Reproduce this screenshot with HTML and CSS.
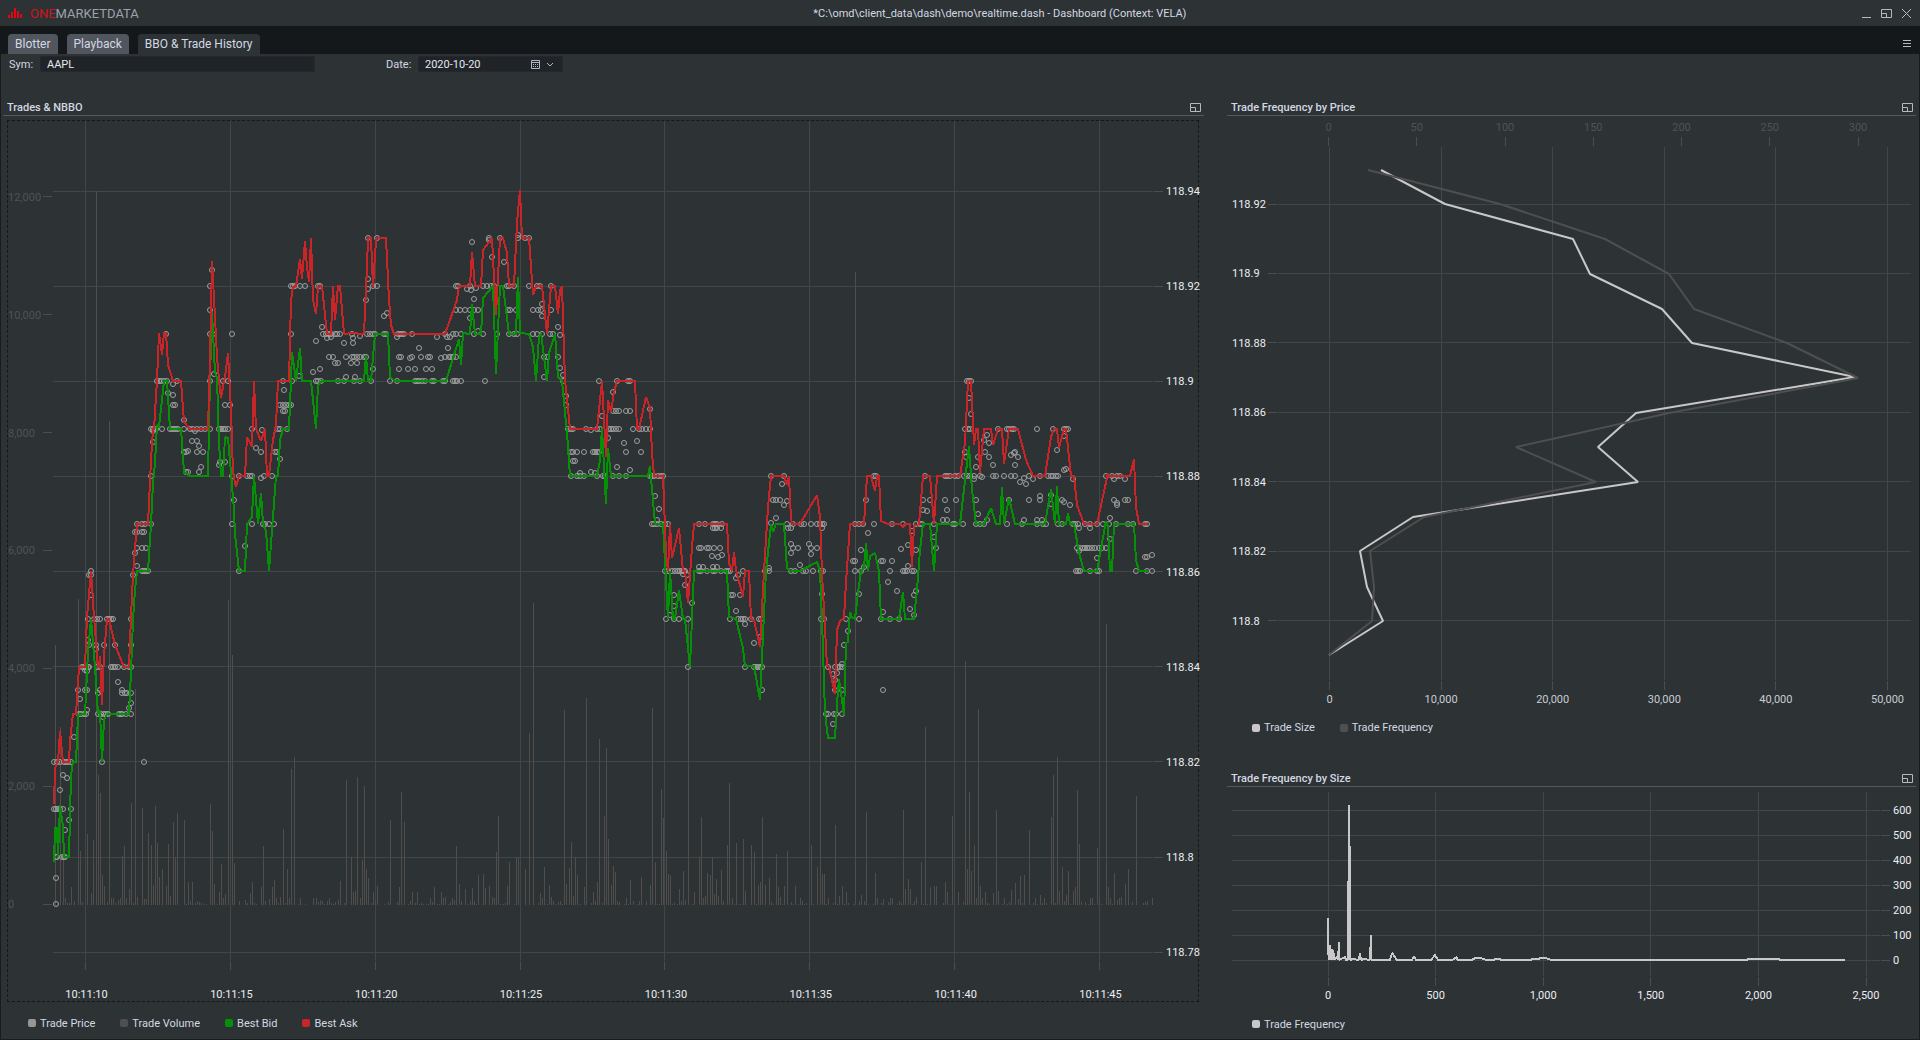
FILE: index.html
```html
<!DOCTYPE html>
<html lang="en">
<head>
    <meta charset="UTF-8">
    <meta name="viewport" content="width=device-width, initial-scale=1.0">
    <title>Dashboard</title>
    <link rel="stylesheet" href="styles.css">
</head>
<body>

<header class="titlebar">
    <svg class="logo" width="14" height="10" viewBox="0 0 14 10"><path d="M0 7h2v3h-2zM3 4h2v6h-2zM6 0h2v10h-2zM9 3h2v7h-2zM12 6h2v4h-2z"/></svg>
    <span class="brand"><b>ONE</b>MARKETDATA</span>
    <h1>*C:\omd\client_data\dash\demo\realtime.dash - Dashboard (Context: VELA)</h1>
    <div class="window-buttons">
        <button type="button" aria-label="Minimize"><svg width="11" height="11"><path d="M1 9.5h9"/></svg></button>
        <button type="button" aria-label="Restore"><svg width="11" height="11"><path d="M.5 1.5h10v8h-10zM.5 5.5h5v4"/></svg></button>
        <button type="button" aria-label="Close"><svg width="11" height="11"><path d="M1 1l9 9M10 1l-9 9"/></svg></button>
    </div>
</header>

<nav class="tabs">
    <button type="button">Blotter</button>
    <button type="button">Playback</button>
    <button type="button" class="active">BBO &amp; Trade History</button>
    <button type="button" class="menu" aria-label="Menu"><svg width="9" height="8"><path d="M0 .5h8M0 3.5h8M0 6.5h8"/></svg></button>
</nav>

<main>
    <form class="filters">
        <label for="sym">Sym:</label>
        <input type="text" id="sym" value="AAPL">
        <label for="date" class="date-label">Date:</label>
        <div class="date-field">
            <input type="text" id="date" value="2020-10-20">
            <button type="button" aria-label="Open calendar">
                <svg width="24" height="11"><path d="M1.5 1.5h8v8h-8zM1.5 3.5h8M3 5.5h1M5 5.5h1M7 5.5h1M3 7.5h1M5 7.5h1M7 7.5h1M17 4l3 3l3-3"/></svg>
            </button>
        </div>
    </form>

    <div class="panels">
        <section class="panel trades">
            <div class="panel-head">
                <h2>Trades &amp; NBBO</h2>
                <button type="button" aria-label="Expand"><svg width="11" height="9"><path d="M.5 .5h10v8h-10zM.5 4.5h5v4"/></svg></button>
            </div>
            <div class="chart boxed"><svg id="tradesChart"></svg></div>
            <ul class="legend">
                <li><i class="price"></i>Trade Price</li>
                <li><i class="volume"></i>Trade Volume</li>
                <li><i class="bid"></i>Best Bid</li>
                <li><i class="ask"></i>Best Ask</li>
            </ul>
        </section>

        <section class="panel by-price">
            <div class="panel-head">
                <h2>Trade Frequency by Price</h2>
                <button type="button" aria-label="Expand"><svg width="11" height="9"><path d="M.5 .5h10v8h-10zM.5 4.5h5v4"/></svg></button>
            </div>
            <div class="chart"><svg id="priceChart"></svg></div>
            <ul class="legend">
                <li><i class="size"></i>Trade Size</li>
                <li><i class="volume"></i>Trade Frequency</li>
            </ul>
        </section>

        <section class="panel by-size">
            <div class="panel-head">
                <h2>Trade Frequency by Size</h2>
                <button type="button" aria-label="Expand"><svg width="11" height="9"><path d="M.5 .5h10v8h-10zM.5 4.5h5v4"/></svg></button>
            </div>
            <div class="chart"><svg id="sizeChart"></svg></div>
            <ul class="legend">
                <li><i class="size"></i>Trade Frequency</li>
            </ul>
        </section>
    </div>
</main>

<script src="data.js"></script>
<script src="charts.js"></script>
</body>
</html>
```

FILE: styles.css
```css
* { box-sizing: border-box; }
body { font-family: Roboto, sans-serif; font-size: 11px; margin: 0; height: 100vh; min-height: 600px; display: flex; flex-direction: column; background: #2d3235; color: #d3d8e2; }
button { font: inherit; color: inherit; background: none; border: 0; padding: 0; cursor: pointer; }
button svg { display: block; fill: none; stroke: #b4b8bf; }
h1, h2, ul { margin: 0; padding: 0; font-weight: normal; }

.titlebar { height: 26px; flex: none; display: flex; align-items: center; padding: 0 8px; }
.logo { fill: #e30613; }
.brand { margin-left: 8px; font-size: 13px; color: #9da1aa; }
.brand b { font-weight: normal; color: #d0141f; }
.titlebar h1 { flex: 1; text-align: center; font-size: 11px; }
.window-buttons { display: flex; gap: 9px; }

.tabs { height: 28px; flex: none; display: flex; align-items: flex-end; gap: 9px; padding: 0 8px; background: #14181b; }
.tabs button { height: 20px; padding: 0 7px; border-radius: 4px 4px 0 0; background: #51555e; font-size: 12px; }
.tabs button.active { background: #2d3235; }
.tabs .menu { margin-left: auto; padding: 0; background: none; }

main { flex: 1; min-height: 0; display: flex; flex-direction: column; border: 1px solid #181c1f; border-top: 0; }
.filters { display: flex; align-items: center; height: 44px; padding: 2px 8px 26px; }
.filters label { width: 31px; }
.filters input { width: 275px; height: 16px; padding: 0 6px; border: 1px solid #24282c; border-radius: 2px; background: #202328; color: #e4e8f0; font: inherit; }
.filters .date-label { margin-left: 71px; width: 32px; }
.date-field { display: flex; align-items: center; width: 145px; height: 16px; border: 1px solid #24282c; border-radius: 2px; background: #202328; padding-right: 8px; }
.date-field input { flex: 1; min-width: 0; width: auto; border: 0; background: none; height: 14px; }

.panels { flex: 1; min-height: 0; display: grid; grid-template-columns: 1201fr 689fr; grid-template-rows: 671fr 270fr; column-gap: 23px; padding: 0 3px 0 2px; }
.panel { display: flex; flex-direction: column; min-width: 0; min-height: 0; }
.trades { grid-row: 1 / 3; }
.panel-head { height: 18px; flex: none; display: flex; align-items: center; justify-content: space-between; padding: 2px 3px 0 4px; border-bottom: 1px solid #55595b; }
.panel-head h2 { font-size: 11px; font-weight: 500; }
.chart { flex: 1; min-height: 0; }
.chart.boxed { margin: 4px 5px 0 4px; border: 1px dashed #14181b; }
.chart svg { display: block; width: 100%; height: 100%; overflow: visible; }
.legend { flex: none; display: flex; gap: 25px; list-style: none; height: 30px; padding-left: 25px; align-items: center; }
.legend li { display: flex; align-items: center; gap: 4px; }
.legend i { width: 8px; height: 8px; border-radius: 2px; }
.trades .legend { height: 37px; padding-top: 5px; }
.by-price .legend { height: 52px; padding-bottom: 31px; }
.legend .price { background: #969696; }
.legend .volume { background: #504f4f; }
.legend .bid { background: #059105; }
.legend .ask { background: #c92427; }
.legend .size { background: #c8c8c8; }

.grid { stroke: #414648; }
.tick { stroke: #4a4e50; }
.axis { font-size: 11px; fill: #eceef2; }
.axis.dim { fill: #505356; }
.axis.soft { fill: #c8ccd3; }
.bars { stroke: #504e4d; fill: none; }
.dots { stroke: #a0a0a0; fill: none; }
.line { fill: none; stroke-width: 2px; stroke-linejoin: bevel; shape-rendering: crispEdges; }
.line.smooth { shape-rendering: auto; }
.line.bid { stroke: #059105; }
.line.ask { stroke: #c92427; }
.line.size { stroke: #c8c8c8; }
.line.freq { stroke: #504f4f; }
```

FILE: data.js
```js
// All series are x,y pairs in dashboard units (1920 x 1040).
const ask = `54,804 55,769 57,762 58,762 60,731 63,762 69,762 70,741 73,714 76,714 79,667 85,667 87,617 91,571 94,617 98,667 99,667 100,656 102,705 104,655 107,619 109,619 115,645 124,667 129,667 131,617 133,575 135,548 137,524 148,524
149,503 151,460 153,429 154,429 157,380 159,333 162,355 164,333 166,333 168,365 173,381 181,381 184,422 190,429 208,429 210,357 212,261 215,317 217,357 219,380 221,398 224,381 225,377 228,353 231,410 233,473 236,487 239,476 245,476 247,437 252,447 254,381 256,429 261,441 265,429 267,476 269,476 273,440 276,425 278,381 289,381 291,300 293,287
296,286 300,259 302,279 305,241 307,267 309,282 311,238 313,300 316,314 318,287 322,286 327,334 331,334 333,286 335,320 338,286 340,286 344,334 352,333 364,334 367,267 368,238 371,238 373,287 376,240 377,238 386,238 389,300 391,325 394,334 410,334 413,333 417,334 445,334 457,300 459,286 470,286 472,252 475,286 481,286 483,250 492,238 494,277 496,315 500,238 503,238 507,253 509,286 514,286 517,223 520,190 522,238 529,238 533,295 536,286 542,286 547,334 551,286 555,286 558,314 560,290 562,286 565,380 570,429
597,429 602,381 606,457 608,400 611,412 614,392 617,381 635,381 637,429 639,429 646,397 650,408 652,453 654,476 663,476 666,553 668,571 670,524 672,558 679,528 683,571 685,571 688,603 692,547 694,524 727,524 729,563 732,571 734,552 736,570 743,597 745,571 749,571 751,619 754,620 760,647 764,571 768,507 771,476 784,476 787,485 789,476 791,520 793,524 800,524 817,495 820,517 822,573 827,666 829,667 835,694 837,630 840,621 844,618 846,583 850,524 864,524 867,476 871,476 875,491 877,476 879,476 881,521 888,524
900,524 903,527 905,524 910,524 912,567 914,526 919,524 923,476 930,476 934,524 937,476 960,476 965,443 968,381 971,381 974,445 976,429 978,429 980,473 984,429 991,429 993,445 998,429 1002,429 1004,464 1009,429 1018,429 1026,460 1033,476 1045,476 1051,437 1054,429 1057,429 1059,448 1064,429 1066,429 1071,476 1074,476 1077,505 1084,524 1097,524 1108,473 1109,476 1130,476 1134,459 1136,507 1139,524 1148,524`;

const bid = `54,862 55,828 57,828 58,857 60,805 63,827 64,857 69,857 71,775 73,762 76,762 78,715 85,714 88,652 91,619 95,667 98,714 100,710 102,762 104,720 107,714 129,714 131,672 133,620 135,590 137,571 148,571 151,524
153,483 155,463 157,425 159,427 164,381 167,381 170,429 181,429 184,472 190,476 208,476 210,377 212,312 215,373 217,377 219,443 221,476 223,476 225,437 228,438 231,473 234,510 235,534 239,571 245,571 247,524 252,517 254,476 258,524 261,493 263,524 266,531 269,571 273,517 276,476 278,476 280,440 283,429 289,429 291,380 292,352 296,381 300,348 302,381
311,381 316,429 318,385 322,381 364,381 366,355 368,381 371,381 375,334 388,334 390,377 395,381 446,381 459,339 461,365 463,333 470,334 472,304 475,334 481,334 483,298 493,286 496,374 500,286 503,286 509,334 516,334 518,277 520,333 529,334 533,347 536,381 539,337 541,333 547,381 549,353 555,334 558,377 562,381 567,433 570,476
597,476 600,460 602,428 606,504 608,448 611,476 648,476 650,466 655,524 663,524 668,619 670,571 673,619 675,619 679,590 683,619 685,619 690,667 694,571 727,571 729,617 736,619 743,648 745,666 754,666 760,700 766,571 769,543 771,524 773,532 776,524 784,524 787,568 790,571 800,571 817,562 820,571 822,619 825,713 828,738 835,738 837,703 839,679 844,715 846,643 848,642 850,612 852,617 855,619 858,593 861,571 864,568 866,543 868,571 870,556 875,553 879,571 881,619
899,619 903,592 905,619 914,619 917,590 920,550 923,524 930,524 934,571 937,524 960,524 969,446 972,490 976,524 984,524 991,508 996,524 1000,524 1002,487 1004,524 1009,498 1015,524 1045,524 1051,489 1055,524 1057,486 1059,524 1066,524 1068,513 1070,524 1074,524 1079,553 1084,571 1097,571 1106,521 1108,527 1110,571 1112,571 1114,524 1134,524 1136,560 1139,571 1148,571`;

// trades that printed on the same level: y -> list of x
const tradeRows = {
    238: [368,377,489,500,518,525,529],
    286: [210,291,293,295,300,305,318,320,373,377,456,458,470,483,487,491,494,507,509,514,529,537,540,551],
    310: [210,456,460,465,470,474,478,508,510,516,533,538,541,551],
    334: [166,210,213,232,291,323,326,329,331,335,337,340,352,367,370,373,375,384,386,398,400,402,404,412,445,453,456,461,474,483,497,509,514,517,533,537,542,550,553],
    357: [329,333,346,352,354,357,360,364,366,399,401,421,428,430,445,449,451,453,456,544,547,558],
    363: [335,338,351,357],
    369: [320,373,399,408,415,426,432],
    381: [157,159,161,164,167,177,210,223,228,283,292,316,318,321,338,344,354,360,371,390,397,415,417,419,422,425,432,434,443,445,453,455,457,461,485,563,599,617,628,630,967,969,971],
    405: [173,175,225,230,280,283,286,289,291,566],
    411: [283,285,613,616,619,626,630],
    429: [151,153,156,162,170,172,174,176,178,184,190,193,197,201,205,210,219,221,223,225,228,252,278,280,287,568,571,573,586,597,600,609,611,613,616,619,633,639,642,646,650,965,968,970,998,1007,1009,1012,1014,1037,1053,1064,1066,1068],
    441: [192,197],
    452: [184,186,197,203,261,275,277,571,573,577,584,593,595,597,599,626,641],
    472: [186,188,199],
    476: [151,232,239,247,250,252,264,272,571,577,580,584,597,603,605,613,619,626,650,652,654,658,661,663,771,784,874,876,925,945,947,950,955,958,964,967,970,974,980,993,996,1004,1011,1015,1029,1040,1048,1051,1053,1056,1058,1106,1112,1117,1120],
    500: [773,776,780,866,923,930,945,956,976,1009,1029,1040,1062,1114,1125,1128],
    520: [943,947,987,1024,1037,1042],
    524: [137,142,145,151,232,252,263,265,269,274,652,654,657,661,665,668,699,705,713,715,717,722,787,793,801,804,811,817,820,822,824,855,859,863,874,892,903,916,920,922,934,953,955,963,976,980,984,1007,1022,1037,1043,1046,1058,1062,1073,1075,1078,1085,1090,1097,1103,1109,1116,1128,1133,1145,1147],
    528: [713,715,717,721,788,791,822,1079,1090],
    532: [135,137,142,144],
    548: [137,142,146,699,701,707,709,714,720,793,798,817,936,1077,1080,1083,1085,1087,1089,1092,1095,1099,1102,1106],
    561: [853,855,881,883,892],
    567: [699,703,713,717,864],
    571: [91,142,144,146,148,239,665,668,672,675,678,680,682,684,685,699,701,707,713,715,721,726,728,730,743,765,769,791,795,803,806,813,821,823,855,861,890,903,905,907,912,914,1076,1078,1080,1090,1097,1099,1136,1147,1152],
    575: [89,91,133,687,738],
    595: [91,674,731,733,740],
    619: [88,94,97,100,107,109,111,113,131,666,674,679,688,730,738,741,743,745,751,759,761,821,824,846,859,881,890,899],
    645: [89,96,104,115,131,844],
    667: [82,84,86,88,89,97,100,111,113,115,118,124,129,131,688,745,754,756,758,760,762,828,835,838,840,842],
    690: [78,85,87,100,122,762,835,842,883],
    693: [98,122,125,127,131],
    714: [79,81,84,86,98,101,104,106,108,119,121,122,126,131,826,828,834,836,842],
    762: [54,57,60,64,66,68,71,102,144],
    809: [54,56,58,60,63,71],
    857: [56,57,62,64,65]
};

const tradeSpots = `63,775 67,778 60,790 74,737 69,820 65,830 56,878 56,904 88,640 96,649 85,670 87,671 118,682 80,699 131,703 87,710 129,708 103,717 135,553 137,566 245,546 153,442 153,431 262,430 195,431 173,384 168,393 173,395 184,420 199,446 188,451 201,467 212,270 214,374 220,462 219,465 225,462 234,500 256,448 261,478 280,459 284,390
472,242 518,235 489,240 368,279 368,289 467,289 471,290 476,288 366,300 384,316 387,313 316,341 322,327 327,338 331,337 353,338 360,336 397,337 437,337 447,337 450,337 344,343 353,343 410,358 412,357 441,358 313,372 419,348 448,348 299,376 346,377 355,377 474,299 470,318 492,257 504,262 542,304 542,316 478,331 558,327 560,335 544,377 560,368 563,375 566,396 591,430
613,392 602,416 650,409 608,438 624,443 637,441 573,461 575,461 617,467 630,470 580,473 591,472 595,473 655,496 659,509 657,520 683,574 685,585 674,606 670,615 692,603 712,556 718,557 722,555 736,578 736,611 745,624 754,643 760,637 782,484 787,501 784,505 776,518 771,523 791,544 791,553 809,544 811,548 811,554 800,565 769,568 822,594 848,631 842,664 833,674 837,673 835,680 833,724 868,533 861,550 859,594 888,582 897,591 883,612
912,531 908,545 901,549 916,550 908,566 916,591 914,595 910,609 914,615 923,510 927,511 947,510 934,537 969,398 971,414 965,452 966,457 978,457 976,467 974,479 982,477 984,440 987,435 989,443 985,452 989,457 993,465 1011,455 1014,453 1018,457 1015,452 1015,465 1020,482 1024,478 1026,484 1033,479 978,514 1040,496 1051,495 1051,504 1057,450 1064,470 1066,469 1064,436 1064,502 1070,505 1073,479 1079,551 1097,558 1110,518 1110,539 1117,503 1117,505 1114,479 1125,479 1145,557 1147,557 1152,555`;

// x,height
const volume = `55,260 60,178 63,48 65,7 67,2 69,2 71,18 74,4 78,306 80,54 82,3 87,71 91,12 93,65 96,714 98,130 100,112 102,30 104,19 107,3 109,484 111,7 113,7 115,2 118,5 120,7 122,49 124,59 126,7 129,16 131,102 133,2 135,216 137,8 142,97 144,6 146,6 148,72 151,60 153,20 155,99 157,62 159,28 162,36 166,19 168,61 170,9 173,83 175,47 177,92 184,85 186,1 188,23 190,4 192,23 195,2 197,4 199,3 201,2 203,1 206,1 210,101 212,74 214,21 217,1 219,13 221,41 223,7 225,11 228,305 232,250 234,42 239,4 245,5 247,2 250,12 252,23 254,2 256,1 261,18 263,59 265,4 269,6 272,18 274,25 276,7 278,2 280,8 283,76 285,2 287,36 289,7 291,136 294,148 298,1 300,7 305,1
313,7 316,7 318,3 320,5 322,4 324,1 327,4 329,7 331,2 333,1 335,3 338,5 340,24 344,2 346,125 351,48 353,13 355,14 357,128 360,7 362,45 364,119 366,36 368,27 371,2 373,13 375,4 377,19 384,1 388,3 390,85 397,3 399,18 401,113 404,83 408,1 410,4 412,13 415,2 417,13 419,1 421,2 423,1 426,1 428,1 430,7 432,3 434,18 437,1 439,1 441,13 443,7 445,8 448,1 450,3 452,7 454,5 456,59 459,21 461,4 465,16 467,1 470,4 472,17 474,4 476,1 478,30 483,31 485,17 489,19 492,8 494,7 496,53 498,89 500,1 503,1 505,2 507,19 509,43 514,1 516,48 518,48 525,36 529,172 533,302 538,2 540,12 542,7 544,38 547,1 549,20 551,8 553,4 555,1 558,3 560,4 562,1 564,195 566,21 569,37 571,63 573,9 575,48 577,30 580,1 584,18 586,207 591,2 593,13 595,4 597,23 599,166 602,2 604,89 606,157 608,66 611,20 613,39 615,33 617,4 619,3 624,1 626,7 628,1 630,25 633,4 637,1 639,4 641,28 646,4 650,20 652,197 655,43 657,1 659,1 661,116 663,87 666,54 668,31 670,30 672,1 674,2 677,1 679,16 681,4 683,34 685,5 688,286 692,1 694,13 699,48 701,88 703,7 705,9 707,32 710,30 712,48 714,11 716,26 718,9 721,35 723,4 727,60 729,122
732,7 734,1 736,62 738,1 740,1 743,66 745,14 751,60 754,53 756,1 758,20 760,23 762,88 765,20 769,27 771,3 773,1 776,51 778,18 780,8 782,1 784,19 787,54 791,3 793,1 795,19 798,1 800,7 802,4 804,1 806,2 811,60 813,1 817,38 820,335 822,31 824,31 826,1 828,7 833,2 835,80 837,1 839,9 842,19 844,1 846,13 848,2 853,1 855,633 859,4 861,10 864,4 866,93 868,1 873,1 875,32 877,7 881,2 883,6 888,3 890,7 892,7 897,1 899,4 901,2 903,95 905,16 908,26 910,16 912,1 914,4 916,8 921,43 923,1 925,178 927,1 930,18 934,19 936,19 943,2 945,23 947,13 950,1 952,89 954,2 958,13 963,3 965,244 967,36 969,113 971,34 974,60 976,7 978,196 980,19 982,7 985,13 987,2 989,1 993,12 996,95 998,14 1002,1 1004,7 1007,1 1009,3 1011,15 1015,22 1018,6 1020,29 1022,2 1024,30 1029,75 1033,2 1035,7 1037,1 1040,10 1042,2 1044,7 1046,2 1051,88 1053,130 1055,2 1057,148 1059,14 1062,38 1064,4 1066,10 1068,34 1070,1 1073,14 1075,18 1077,115 1079,61 1081,3 1085,3 1088,1 1090,7 1092,7 1094,1 1097,57 1099,7 1101,1 1106,281 1108,18 1110,7 1112,1 1114,32 1117,5 1119,7 1121,8 1125,21 1128,36 1132,3 1136,109 1143,2 1145,3 1147,4 1152,7`;

const sizeByPrice = `1381,170 1445,204 1573,239 1590,274 1662,309 1692,343 1855,377 1636,413 1598,447 1638,482 1413,517 1360,551 1367,587 1383,621 1329,655`;
const freqByPrice = `1368,170 1500,204 1605,239 1669,274 1694,309 1787,343 1858,378 1669,413 1516,447 1596,482 1424,517 1370,551 1374,587 1372,621 1329,655`;
const freqBySize = `1328,918 1328,950 1329,960 1330,945 1331,960 1332,949 1333,960 1333,950 1335,960 1337,956 1338,960 1339,942 1339,960 1345,957 1346,960 1348,960 1349,805 1350,884 1350,960 1353,959 1359,960 1360,953 1361,960 1364,959 1370,960 1371,935 1371,960 1390,960 1392,953 1397,960 1412,960 1414,956 1416,960 1431,960 1435,955 1438,960 1452,960 1457,957 1457,960 1472,960 1473,959 1476,958 1481,958 1486,960 1494,960 1495,959 1500,959 1501,960 1531,960 1532,959 1539,959 1540,958 1545,958 1552,960 1747,960 1748,959 1779,959 1780,960 1845,960`;
```

FILE: charts.js
```js
// box = [left, top, width, height] of the chart in dashboard units
function chart(id, box) {
    const el = document.getElementById(id);
    const kx = el.clientWidth / box[2], ky = el.clientHeight / box[3];
    const X = x => (x - box[0]) * kx, Y = y => (y - box[1]) * ky;
    const snap = v => Math.round(v - 0.5) + 0.5;
    let out = '';
    return {
        X, Y,
        add: s => out += s,
        h: (y, x1, x2, cls) => out += `<path class="${cls}" d="M${X(x1)} ${snap(Y(y))}H${X(x2)}"/>`,
        v: (x, y1, y2, cls) => out += `<path class="${cls}" d="M${snap(X(x))} ${Y(y1)}V${Y(y2)}"/>`,
        text: (x, y, s, cls, anchor) => out += `<text class="axis ${cls}" x="${X(x)}" y="${Y(y) + 4}" text-anchor="${anchor}">${s}</text>`,
        line: (data, cls) => out += `<polyline class="line ${cls}" points="${pairs(data).map(p => X(p[0]) + ',' + Y(p[1])).join(' ')}"/>`,
        draw: () => el.innerHTML = out
    };
}

function pairs(data) {
    return data.trim().split(/\s+/).map(p => p.split(',').map(Number));
}

function drawTrades() {
    const c = chart('tradesChart', [8, 121, 1190, 880]);
    for (let i = 0; i < 9; i++) {
        const y = 191 + i * 95.15;
        c.h(y, 53, 1153, 'grid');
        c.h(y, 1154, 1163, 'tick');
        c.text(1166, y, +(118.94 - i * 0.02).toFixed(2), '', 'start');
    }
    for (let i = 0; i < 8; i++) {
        const x = 85.5 + i * 144.86;
        c.v(x, 121, 961, 'grid');
        c.v(x, 962, 970, 'tick');
        c.text(x + 1, 994, '10:11:' + (10 + i * 5), '', 'middle');
    }
    for (let i = 0; i < 7; i++) {
        const y = 904 - i * 117.85;
        c.h(y, 43, 52, 'tick');
        c.text(8, y, (i * 2000).toLocaleString('en-US'), 'dim', 'start');
    }
    pairs(volume).forEach(([x, h]) => c.v(x + 0.5, 905 - h, 905, 'bars'));

    const dot = (x, y) => c.add(`<circle cx="${c.X(x)}" cy="${c.Y(y)}" r="2.5"/>`);
    c.add('<g class="dots">');
    Object.keys(tradeRows).forEach(y => tradeRows[y].forEach(x => dot(x, +y)));
    pairs(tradeSpots).forEach(([x, y]) => dot(x, y));
    c.add('</g>');
    c.line(bid, 'bid');
    c.line(ask, 'ask');
    c.draw();
}

function drawByPrice() {
    const c = chart('priceChart', [1227, 116, 689, 601]);
    for (let i = 0; i < 7; i++) {
        const y = 204 + i * 69.45, x = 1328.5 + i * 88.25;
        c.h(y, 1278, 1911, 'grid');
        c.h(y, 1268, 1277, 'tick');
        c.text(1232, y, +(118.92 - i * 0.02).toFixed(2), '', 'start');
        c.v(x, 137, 146, 'tick');
        c.text(x, 127, i * 50, 'dim', 'middle');
    }
    for (let i = 0; i < 6; i++) {
        const x = 1329.5 + i * 111.6;
        c.v(x, 147, 680, 'grid');
        c.v(x, 681, 690, 'tick');
        c.text(x, 699, (i * 10000).toLocaleString('en-US'), 'soft', 'middle');
    }
    c.line(sizeByPrice, 'size smooth');
    c.line(freqByPrice, 'freq smooth');
    c.draw();
}

function drawBySize() {
    const c = chart('sizeChart', [1227, 787, 689, 222]);
    for (let i = 0; i < 7; i++) {
        const y = 810 + i * 25;
        c.h(y, 1232, 1880, 'grid');
        c.h(y, 1881, 1890, 'tick');
        c.text(1893, y, 600 - i * 100, '', 'start');
    }
    for (let i = 0; i < 6; i++) {
        const x = 1328 + i * 107.6;
        c.v(x, 792, 976, 'grid');
        c.v(x, 977, 986, 'tick');
        c.text(x, 995, (i * 500).toLocaleString('en-US'), '', 'middle');
    }
    c.line(freqBySize, 'size');
    c.draw();
}

function drawAll() {
    drawTrades();
    drawByPrice();
    drawBySize();
}
window.addEventListener('resize', drawAll);
drawAll();
```
